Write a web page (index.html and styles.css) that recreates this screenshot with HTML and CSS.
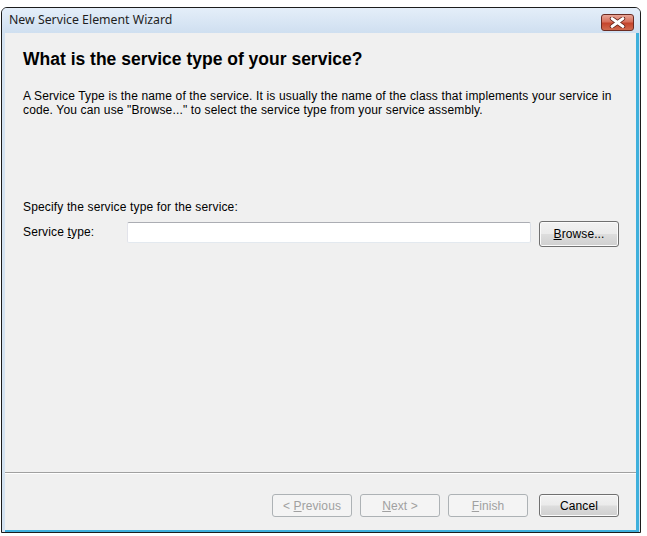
FILE: index.html
```html
<!DOCTYPE html>
<html lang="en">
<head>
  <meta charset="UTF-8">
  <title>New Service Element Wizard</title>
  <link rel="stylesheet" href="styles.css">
</head>
<body>
  <div class="window">
    <div class="titlebar">
      <span class="title">New Service Element Wizard</span>
      <button class="close" title="Close">
        <svg width="17" height="11" viewBox="0 0 17 11">
          <path d="M3 1.5 L14 9.5 M14 1.5 L3 9.5" stroke="#5a1a10" stroke-width="4.4" stroke-linecap="round"/>
          <path d="M3 1.5 L14 9.5 M14 1.5 L3 9.5" stroke="#fff" stroke-width="2.8" stroke-linecap="round"/>
        </svg>
      </button>
    </div>

    <div class="client">
      <div class="content">
        <h1>What is the service type of your service?</h1>
        <p class="intro">A Service Type is the name of the service. It is usually the name of the class that implements your service in<br>code. You can use "Browse..." to select the service type from your service assembly.</p>

        <p class="hint">Specify the service type for the service:</p>
        <div class="field">
          <label for="serviceType">Service <u>t</u>ype:</label>
          <input id="serviceType" type="text">
          <button class="btn"><u>B</u>rowse...</button>
        </div>
      </div>

      <div class="footer">
        <button class="btn" disabled>&lt; <u>P</u>revious</button>
        <button class="btn" disabled><u>N</u>ext &gt;</button>
        <button class="btn" disabled><u>F</u>inish</button>
        <button class="btn default">Cancel</button>
      </div>
    </div>
  </div>
</body>
</html>
```

FILE: styles.css
```css
body {
  margin: 0;
  background: #fff;
  font-family: "Liberation Sans", Arial, sans-serif;
  font-size: 12px;
  letter-spacing: 0.15px;
  color: #000;
}
.window {
  width: 638px;
  height: 524px;
  margin: 7px 0 0 1px;
  border: 1px solid #1c1c1c;
  border-radius: 6px 6px 0 0;
  background: #d3e2f1;
  display: flex;
  flex-direction: column;
}
.titlebar {
  height: 25px;
  display: flex;
  align-items: center;
  padding: 0 6px 0 7px;
  border-radius: 5px 5px 0 0;
  background: linear-gradient(#e4eef9, #cfdff0);
}
.title {
  flex: 1;
  font-family: "Noto Sans", sans-serif;
  font-size: 12.3px;
  letter-spacing: 0;
  color: #1e1e1e;
  margin-top: -2px;
}
.close {
  width: 33px;
  height: 17px;
  margin-top: 3px;
  padding: 0;
  border: 1px solid #6b2b22;
  border-radius: 3px;
  background: linear-gradient(#e8a596 0%, #d7705c 45%, #c5452c 55%, #d06a4e 100%);
  display: flex;
  align-items: center;
  justify-content: center;
}
.client {
  flex: 1;
  margin: 0 1px 0 3px;
  background: #f0f0f0;
  border-right: 3px solid #3fb0dc;
  border-bottom: 2px solid #3fb0dc;
  display: flex;
  flex-direction: column;
}
.content {
  flex: 1;
  padding: 16px 17px 0 18px;
}
h1 {
  margin: 0;
  font-size: 17.5px;
  line-height: 20px;
  font-weight: bold;
  letter-spacing: 0;
  color: #000;
}
.intro {
  margin: 20px 0 0;
  line-height: 14px;
}
.hint {
  margin: 83px 0 0;
  line-height: 14px;
}
.field {
  display: flex;
  align-items: flex-start;
  margin-top: 7px;
}
.field label {
  width: 104px;
  line-height: 21px;
  margin-top: 1px;
}
.field input {
  width: 404px;
  height: 21px;
  margin-top: 1px;
  box-sizing: border-box;
  border: 1px solid #abadb3;
  border-color: #abadb3 #dbdfe6 #e3e9ef #e2e3ea;
  border-radius: 2px;
  background: #fff;
  padding: 2px 3px;
  font: inherit;
}
.btn {
  width: 80px;
  height: 23px;
  padding: 0;
  border: 1px solid #707070;
  border-radius: 3px;
  background: linear-gradient(#f2f2f2 0%, #ebebeb 48%, #dddddd 52%, #cfcfcf 100%);
  font-family: "Liberation Sans", Arial, sans-serif;
  font-size: 12px;
  letter-spacing: 0.1px;
  color: #000;
  box-shadow: inset 0 0 0 1px #fbfbfb;
}
.field .btn {
  height: 26px;
  margin-left: 8px;
}
.btn:disabled {
  color: #a0a0a0;
  border-color: #adb2b5;
  background: #f4f4f4;
  box-shadow: none;
}
.footer {
  box-sizing: border-box;
  height: 58px;
  border-top: 1px solid #a0a0a0;
  box-shadow: inset 0 1px 0 #fff;
  display: flex;
  justify-content: flex-end;
  align-items: flex-start;
  gap: 8px;
  padding: 21px 17px 0 0;
}
.footer .btn.default {
  margin-left: 3px;
}
```
